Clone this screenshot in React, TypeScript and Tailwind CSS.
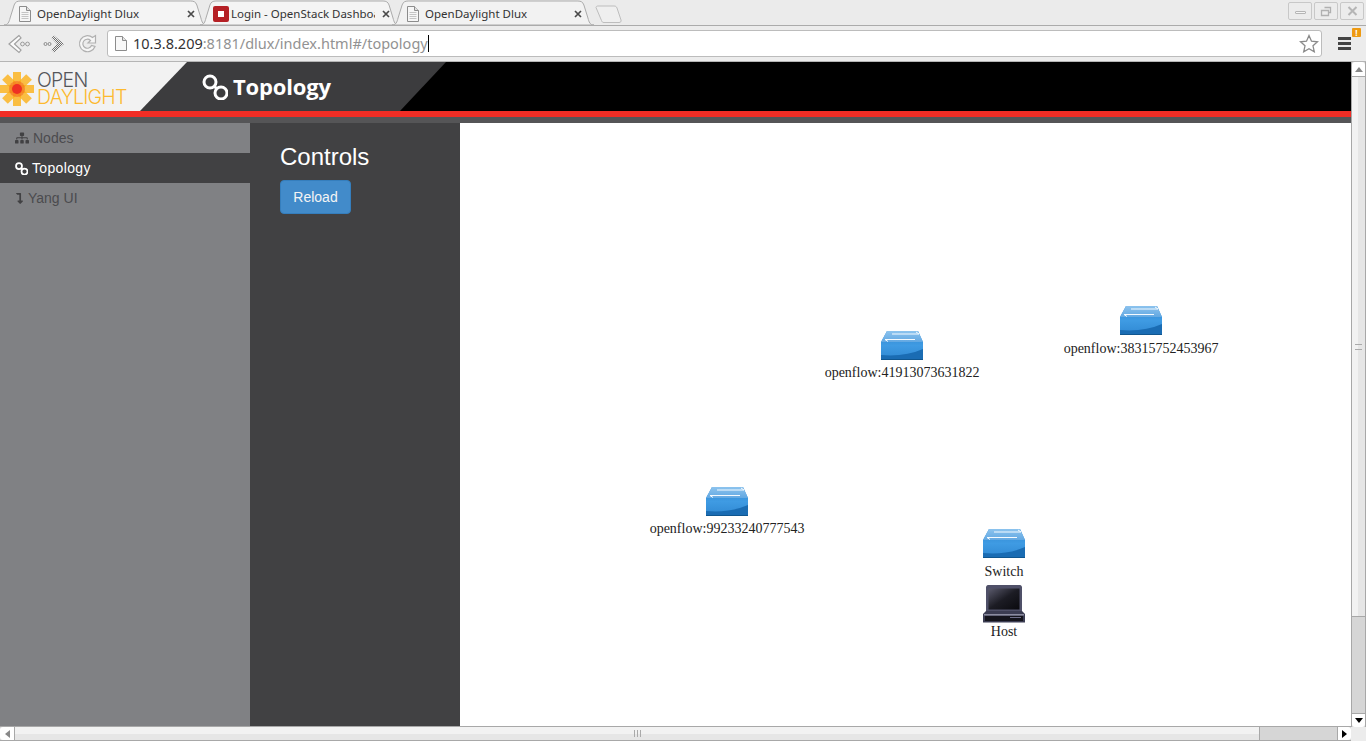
import { useId } from 'react';
import { FaSitemap, FaLevelDownAlt } from 'react-icons/fa';

const nodes = [
  { id: 'a', kind: 'switch', label: 'openflow:41913073631822', pos: 'left-[442px] top-[208px]', gap: 'mt-[5px]' },
  { id: 'b', kind: 'switch', label: 'openflow:38315752453967', pos: 'left-[681px] top-[183px]', gap: 'mt-[6px]' },
  { id: 'c', kind: 'switch', label: 'openflow:99233240777543', pos: 'left-[267px] top-[364px]', gap: 'mt-[5px]' },
  { id: 'd', kind: 'switch', label: 'Switch', pos: 'left-[544px] top-[406px]', gap: 'mt-[6px]' },
  { id: 'e', kind: 'host', label: 'Host', pos: 'left-[544px] top-[462px]', gap: 'mt-[1px]' },
];

function PageIcon() {
  return (
    <svg width="14" height="16" viewBox="0 0 14 16" className="shrink-0">
      <path d="M1.5.5h7l4 4v11h-11z" fill="#f6f6f6" stroke="#8c8c8c" />
      <path d="M8.5.5v4h4" fill="#e0e0e0" stroke="#8c8c8c" />
      <path d="M3.5 6.5h7M3.5 8.500h7M3.5 10.500h7M3.5 12.500h7" stroke="#c4c4c4" />
    </svg>
  );
}

function CloseX({ className = '' }: { className?: string }) {
  return (
    <svg width="8" height="8" viewBox="0 0 8 8" className={`shrink-0 ${className}`}>
      <path d="M1 1l6 6M7 1L1 7" stroke="#4a4a4a" strokeWidth="1.7" />
    </svg>
  );
}

function Tab({ title, active, favicon, widthClass }: { title: string; active?: boolean; favicon?: boolean; widthClass: string }) {
  return (
    <div className={`relative h-[25px] flex items-center pl-[14px] pr-[12px] pt-[2px] -mr-[7px] ${widthClass} ${active ? 'z-10' : ''}`}>
      <svg className="absolute inset-0 w-full h-full" viewBox="0 0 200 25" preserveAspectRatio="none">
        <path
          d="M0 25 C4 25 5 22 6 18 L10 5 C11 2 13 1 16 1 L184 1 C187 1 189 2 190 5 L194 18 C195 22 196 25 200 25 Z"
          fill={active ? '#f2f2f2' : '#f4f4f4'}
          stroke="#ababab"
          vectorEffect="non-scaling-stroke"
        />
      </svg>
      <div className="relative flex items-center w-full">
        {favicon ? (
          <div className="w-[16px] h-[16px] -ml-[1px] bg-[#b52025] rounded-[2px] flex items-center justify-center shrink-0">
            <div className="w-[6px] h-[6px] bg-white" />
          </div>
        ) : (
          <PageIcon />
        )}
        <span className={`${favicon ? 'ml-[2px]' : 'ml-[5px]'} mr-[4px] text-[11.5px] text-[#333] whitespace-nowrap overflow-hidden flex-1`}>{title}</span>
        <CloseX className={favicon ? 'translate-x-[3px]' : ''} />
      </div>
    </div>
  );
}

function WinButton({ children }: { children: React.ReactNode }) {
  return (
    <div className="w-[24px] h-[18px] rounded-[2px] border border-[#c8c8c8] bg-[#ececec] flex items-center justify-center">
      {children}
    </div>
  );
}

function TabBar() {
  return (
    <div className="relative h-[26px] bg-[#ebebeb] border-b border-[#ababab] flex items-start pl-[4px] shrink-0">
      <Tab title="OpenDaylight Dlux" widthClass="w-[203px]" />
      <Tab title="Login - OpenStack Dashboard" favicon widthClass="w-[199px]" />
      <Tab title="OpenDaylight Dlux" active widthClass="w-[202px]" />
      <svg width="30" height="20" viewBox="0 0 30 20" className="ml-[8px] mt-[5px]">
        <path d="M1 2.5C1 1.500 2 1 3 1h16c1.500 0 2.500.5 3 2l4 12c.5 1.500-.5 2.500-2 2.500H9c-1.500 0-2-.5-2.500-2z" fill="#efefef" stroke="#bdbdbd" />
      </svg>
      <div className="ml-auto mr-[2px] mt-[2px] flex gap-[2px]">
        <WinButton><div className="w-[11px] h-[3px] rounded-[1px] border border-[#b5b5b5] bg-[#f5f5f5] mt-[3px]" /></WinButton>
        <WinButton>
          <svg width="12" height="11" viewBox="0 0 12 11"><path d="M4.500 1.500h6v5h-2M1.500 4.500h7v5h-7z" fill="none" stroke="#b0b0b0" strokeWidth="1.300" /></svg>
        </WinButton>
        <WinButton>
          <svg width="11" height="10" viewBox="0 0 11 10"><path d="M1.500 1l8 8M9.500 1l-8 8" stroke="#b5b5b5" strokeWidth="2" /></svg>
        </WinButton>
      </div>
    </div>
  );
}

function Toolbar() {
  return (
    <div className="h-[36px] bg-[#ececec] border-b border-[#b5b5b5] flex items-center shrink-0">
      <div className="w-[107px] flex items-center pl-[8px] gap-[11px] shrink-0">
        <svg width="24" height="20" viewBox="0 0 24 20">
          <path d="M11 1.500L1 10l10 8.500 2-2.500-6.500-6L13 4z" fill="#fbfbfb" stroke="#a0a0a0" strokeWidth="1.200" />
          <circle cx="14.500" cy="10" r="1.900" fill="none" stroke="#9a9a9a" />
          <circle cx="19.500" cy="10" r="1.900" fill="none" stroke="#9a9a9a" />
        </svg>
        <svg width="24" height="20" viewBox="0 0 24 20">
          <defs>
            <pattern id="dither" width="2" height="2" patternUnits="userSpaceOnUse">
              <rect width="2" height="2" fill="#efefef" />
              <rect width="1" height="1" fill="#6f6f6f" />
              <rect x="1" y="1" width="1" height="1" fill="#6f6f6f" />
            </pattern>
          </defs>
          <circle cx="2.500" cy="10" r="1.500" fill="none" stroke="#8a8a8a" />
          <circle cx="6.500" cy="10" r="1.500" fill="none" stroke="#8a8a8a" />
          <path d="M11 1.500L21 10l-10 8.500-2.500-2.500 5.500-6-5.500-6z" fill="url(#dither)" />
        </svg>
        <svg width="20" height="20" viewBox="0 0 20 20">
          <path d="M17 12.500A8 8 0 1 1 14.500 3.500L17.500 1.500V9H10L12.500 6.500A4.500 4.500 0 1 0 13.500 11.500z" fill="#f6f6f6" stroke="#b0b0b0" strokeWidth="1.200" />
        </svg>
      </div>
      <div className="w-[1215px] h-[27px] bg-white border border-[#bcbcbc] rounded-[3px] flex items-center pl-[7px] pr-[2px] shrink-0">
        <svg width="12" height="15" viewBox="0 0 12 15" className="shrink-0">
          <path d="M.5.5h7l4 4v10H.5z" fill="#f8f8f8" stroke="#8c8c8c" />
          <path d="M7.500.5v4h4" fill="#e4e4e4" stroke="#8c8c8c" />
        </svg>
        <span className="ml-[6px] text-[14.5px] text-[#333] whitespace-nowrap">
          10.3.8.209<span className="text-[#929292]">:8181/dlux/index.html#/topology</span>
        </span>
        <div className="w-px h-[17px] bg-black" />
        <svg width="20" height="19" viewBox="0 0 20 19" className="ml-auto">
          <path d="M10 1.500l2.500 5.700 6 .6-4.500 4 1.300 6L10 14.700 4.700 17.800l1.300-6-4.500-4 6-.6z" fill="#fff" stroke="#8a8a8a" strokeWidth="1.300" />
        </svg>
      </div>
      <div className="relative ml-[16px] flex flex-col gap-[2px] w-[13px] shrink-0">
        <div className="h-[3px] bg-[#444]" />
        <div className="h-[3px] bg-[#444]" />
        <div className="h-[3px] bg-[#444]" />
        <div className="absolute -top-[9px] left-[14px] w-[9px] h-[9px] rounded-[1px] bg-[#ee9a12] text-white text-[8px] leading-[9px] font-bold text-center">!</div>
      </div>
    </div>
  );
}

function Logo() {
  const petals = [0, 45, 90, 135];
  return (
    <svg width="35" height="34" viewBox="0 0 35 34" className="shrink-0">
      {petals.map((r) => (
        <rect key={r} x="13" y="0" width="8" height="34" fill="#fbb017" opacity="0.8" transform={`rotate(${r} 17 17)`} />
      ))}
      <circle cx="17" cy="17" r="8" fill="#f26522" opacity="0.55" />
      <circle cx="17" cy="17" r="5" fill="#ee3124" />
    </svg>
  );
}

function LinkedCircles({ size, stroke }: { size: number; stroke: number }) {
  return (
    <svg width={size} height={size} viewBox="0 0 26 26" className="shrink-0">
      <circle cx="8" cy="8" r="6" fill="none" stroke="currentColor" strokeWidth={stroke} />
      <circle cx="19" cy="19" r="6" fill="none" stroke="currentColor" strokeWidth={stroke} />
      <path d="M12 12l3 3" stroke="currentColor" strokeWidth={stroke} />
    </svg>
  );
}

function Header() {
  return (
    <div className="shrink-0">
      <div className="h-[49px] bg-black">
        <div className="w-[446px] h-full bg-[#3c3c3e] [clip-path:polygon(0_0,100%_0,400px_100%,0_100%)] flex">
          <div className="w-[187px] h-full bg-[#f2f2f2] [clip-path:polygon(0_0,100%_0,140px_100%,0_100%)] flex items-center pt-[4px]">
            <Logo />
            <div className="ml-[2px] font-['Inter',sans-serif] text-[19.5px] leading-[17px] font-light tracking-[-0.75px]">
              <div className="text-[#55565a]">OPEN</div>
              <div className="text-[#fdb92e]">DAYLIGHT</div>
            </div>
          </div>
          <div className="ml-[15px] flex items-center text-white">
            <LinkedCircles size={26} stroke={3} />
            <span className="ml-[5px] font-['Open_Sans',sans-serif] font-bold text-[22px] tracking-[-0.15px]">Topology</span>
          </div>
        </div>
      </div>
      <div className="h-[6px] bg-[#f12d25]" />
      <div className="h-[6px] bg-[#555557]" />
    </div>
  );
}

function SideItem({ label, icon, active }: { label: string; icon: React.ReactNode; active?: boolean }) {
  return (
    <div className={`h-[30px] flex items-center pl-[15px] text-[14px] ${active ? 'bg-[#414143] text-white tracking-[0.35px]' : 'text-[#4b4b4e]'}`}>
      {icon}
      {label}
    </div>
  );
}

function SwitchIcon() {
  const id = useId();
  return (
    <svg width="42" height="29" viewBox="0 0 42 29">
      <defs>
        <linearGradient id={`${id}t`} x1="0" y1="0" x2="0" y2="1">
          <stop offset="0" stopColor="#8cc3ee" />
          <stop offset="1" stopColor="#62a8e2" />
        </linearGradient>
        <linearGradient id={`${id}f`} x1="0" y1="0" x2="0" y2="1">
          <stop offset="0" stopColor="#2f86cf" />
          <stop offset="0.5" stopColor="#3f9be3" />
          <stop offset="1" stopColor="#2f88d2" />
        </linearGradient>
      </defs>
      <path d="M0 11L6 0h31l5 11v18H0z" fill={`url(#${id}f)`} />
      <path d="M0 11L6 0h31l5 11z" fill={`url(#${id}t)`} />
      <path d="M0 24Q24 26 42 18V29H0z" fill="#1a6cb3" />
      <path d="M0 28h42v1H0z" fill="#10568f" />
      <path d="M11 3h27l-3-2M34 8.500H4l3 2" fill="none" stroke="#f4faff" strokeWidth="1" />
    </svg>
  );
}

function HostIcon() {
  const id = useId();
  return (
    <svg width="42" height="38" viewBox="0 0 42 38">
      <defs>
        <linearGradient id={`${id}s`} x1="0" y1="0" x2="1" y2="1">
          <stop offset="0" stopColor="#5a5a6c" />
          <stop offset="0.5" stopColor="#1c1c24" />
          <stop offset="1" stopColor="#0a0a0e" />
        </linearGradient>
      </defs>
      <path d="M3 2.500C3 1 4 0 5 0h32c1 0 2 1 2 2.500V26H3z" fill="#4f5068" />
      <rect x="5.500" y="3.500" width="31" height="21" fill={`url(#${id}s)`} />
      <path d="M3 26h36l3 3v8.500H0V29z" fill="#3b3c52" />
      <rect x="1" y="29" width="40" height="1.500" fill="#8b8ca0" />
      <rect x="2" y="31" width="38" height="5" fill="#14141c" />
      <rect x="27" y="32" width="11" height="1" fill="#70708a" />
    </svg>
  );
}

export default function App() {
  return (
    <div className="w-[1366px] h-[741px] overflow-hidden flex flex-col font-['Noto_Sans',sans-serif] bg-white">
      <TabBar />
      <Toolbar />
      <div className="flex-1 flex min-h-0">
        <div className="w-[1351px] flex flex-col min-w-0">
          <Header />
          <div className="flex-1 flex min-h-0 font-['Liberation_Sans',sans-serif]">
            <div className="w-[250px] bg-[#808184]">
              <SideItem label="Nodes" icon={<FaSitemap className="w-[14px] h-[14px] mr-[4px] text-[#414143]" />} />
              <SideItem label="Topology" active icon={<span className="mr-[4px]"><LinkedCircles size={13} stroke={3.500} /></span>} />
              <SideItem label="Yang UI" icon={<FaLevelDownAlt className="w-[9px] h-[11px] mr-[4px] text-[#414143]" />} />
            </div>
            <div className="w-[210px] bg-[#414143] pl-[30px] pt-[20px]">
              <h2 className="text-[24px] leading-[27px] text-white">Controls</h2>
              <button className="mt-[10px] w-[71px] h-[34px] rounded-[4px] bg-[#428bca] border border-[#357ebd] text-[#f4f4f4] text-[14px]">Reload</button>
            </div>
            <div className="relative flex-1 bg-white font-['Liberation_Serif',serif] text-[14px] text-[#222]">
              {nodes.map((n) => (
                <div key={n.id} className={`absolute w-0 flex flex-col items-center ${n.pos}`}>
                  <div className="w-[42px] flex justify-center">{n.kind === 'switch' ? <SwitchIcon /> : <HostIcon />}</div>
                  <div className={`whitespace-nowrap leading-[16px] ${n.gap}`}>{n.label}</div>
                </div>
              ))}
            </div>
          </div>
          <div className="h-[15px] flex bg-[#d6d6d6] border-y border-[#a8a8a8] shrink-0">
            <div className="w-[15px] bg-white border-r border-[#a8a8a8] rounded-l-[3px] flex items-center justify-center">
              <div className="w-0 h-0 border-y-[4px] border-y-transparent border-r-[5px] border-r-[#888]" />
            </div>
            <div className="w-[1245px] border-r border-[#a8a8a8] flex items-center justify-center bg-[linear-gradient(#f2f2f2_50%,#e6e6e6_50%)]">
              <div className="w-[7px] h-[7px] border-x border-[#aaa] flex justify-center"><div className="w-px h-full bg-[#aaa]" /></div>
            </div>
            <div className="flex-1" />
            <div className="w-[14px] bg-white border-l border-[#a8a8a8] rounded-r-[3px] flex items-center justify-center">
              <div className="w-0 h-0 border-y-[4px] border-y-transparent border-l-[5px] border-l-black" />
            </div>
          </div>
        </div>
        <div className="w-[15px] flex flex-col bg-[#d6d6d6] border-x border-[#a8a8a8]">
          <div className="h-[15px] bg-white border-b border-[#a8a8a8] rounded-t-[3px] flex items-center justify-center shrink-0">
            <div className="w-0 h-0 border-x-[4px] border-x-transparent border-b-[5px] border-b-[#888]" />
          </div>
          <div className="h-[540px] flex items-center justify-center border-b border-[#a8a8a8] bg-[linear-gradient(90deg,#f2f2f2_50%,#e6e6e6_50%)] shrink-0">
            <div className="w-[7px] h-[6px] border-y border-[#aaa]" />
          </div>
          <div className="flex-1" />
          <div className="h-[14px] bg-white border-t border-[#a8a8a8] rounded-b-[3px] flex items-center justify-center shrink-0">
            <div className="w-0 h-0 border-x-[4px] border-x-transparent border-t-[5px] border-t-black" />
          </div>
          <div className="h-[14px] bg-[#ececec] -mx-px" />
        </div>
      </div>
    </div>
  );
}
